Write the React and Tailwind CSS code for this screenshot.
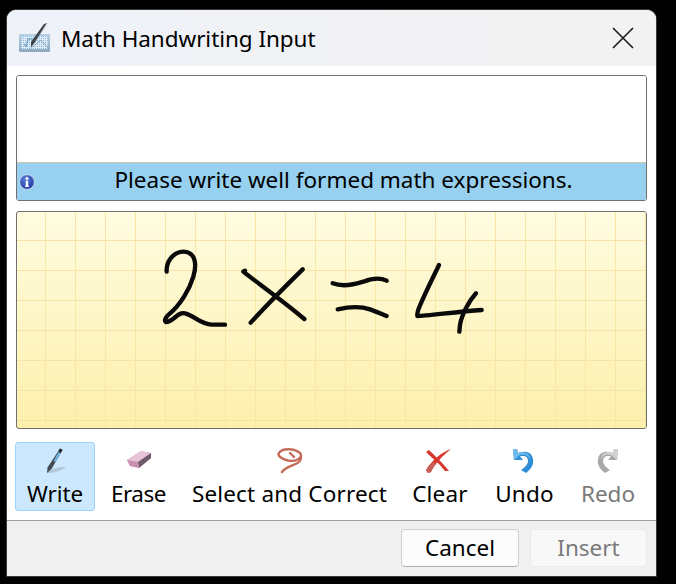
import React from "react";

const font = "font-['Noto_Sans','Open_Sans',sans-serif]";

function TitleIcon() {
  return (
    <svg width="36" height="36" viewBox="0 0 36 36" className="shrink-0">
      <defs>
        <linearGradient id="tab" x1="0" y1="0" x2="0" y2="1">
          <stop offset="0" stopColor="#b9d0e4" />
          <stop offset="1" stopColor="#8fa9bd" />
        </linearGradient>
        <pattern id="dots" width="2" height="2" patternUnits="userSpaceOnUse">
          <rect width="2" height="2" fill="#dcebf7" />
          <rect width="1" height="1" fill="#8fbbdf" />
        </pattern>
      </defs>
      <rect x="2" y="14" width="31" height="18" rx="1" fill="url(#tab)" />
      <rect x="4" y="16" width="27" height="13" fill="url(#dots)" />
      <path d="M7 24l2 3 2-8h5" fill="none" stroke="#5c93b5" strokeWidth="1" />
      <path d="M14 28l10-8 8 9" fill="none" stroke="#7b8e9c" strokeWidth="1" opacity="0.7" />
      <path d="M30 3 L19 21 L14 27 L14 22 L27 4 Z" fill="#3b4148" />
      <path d="M30 3 L18 22" stroke="#9aa4ac" strokeWidth="0.8" />
    </svg>
  );
}

function InfoIcon() {
  return (
    <svg width="16" height="16" viewBox="0 0 16 16" className="shrink-0">
      <defs>
        <radialGradient id="inf" cx="0.4" cy="0.3" r="0.8">
          <stop offset="0" stopColor="#5c7fdb" />
          <stop offset="1" stopColor="#18309a" />
        </radialGradient>
      </defs>
      <circle cx="8" cy="8" r="7.3" fill="url(#inf)" stroke="#dfe8f5" strokeWidth="0.7" />
      <circle cx="8" cy="4.4" r="1.5" fill="#fff" />
      <rect x="6.8" y="6.8" width="2.4" height="5.6" fill="#fff" />
      <rect x="6" y="11.6" width="4" height="1.2" fill="#fff" />
    </svg>
  );
}

function PenIcon() {
  return (
    <svg width="28" height="28" viewBox="0 0 28 28">
      <path d="M6 26 C10 21 18 20 25 20 C20 24 12 26 6 26Z" fill="#9fb0ba" opacity="0.6" />
      <path d="M19 1.5 L21.5 3 L10.5 22 L6 26 L6.5 20.5 Z" fill="#454b52" />
      <path d="M17.5 5 L19.5 6.5 L14.5 15 L12.5 14 Z" fill="#6db4df" />
      <path d="M19 1.5 L21.5 3 L20 5.5 L17.5 4 Z" fill="#23282c" />
    </svg>
  );
}

function EraserIcon() {
  return (
    <svg width="28" height="28" viewBox="0 0 28 28">
      <path d="M2 13 L16 4 L26 6 L26 11 L14 21 L5 19 Z" fill="#dca9c6" />
      <path d="M2 13 L16 4 L26 6 L13 15 Z" fill="#e8c3d8" />
      <path d="M13 15 L26 6 L26 11 L14 21 Z" fill="#6e5a6a" />
      <path d="M2 13 L13 15 L14 21 L5 19 Z" fill="#c78fb0" />
    </svg>
  );
}

function LassoIcon() {
  return (
    <svg width="28" height="28" viewBox="0 0 28 28">
      <path
        d="M3 6 C6 1 18 1 24 6 C28 11 19 15 12 13.5 C6 12 1 9 3 6 M14 6 L18 10 M25 10 C25 19 12 17 6 25"
        fill="none"
        stroke="#c46c58"
        strokeWidth="2.4"
        strokeLinecap="round"
      />
    </svg>
  );
}

function ClearIcon() {
  return (
    <svg width="28" height="28" viewBox="0 0 28 28">
      <path d="M2 5 L5 3 C11 9 18 15 25 24 L21 24 C15 16 8 11 2 5Z" fill="#d8362b" />
      <path d="M27 2 C18 5 8 13 2 23 L4 26 L7 25 C10 18 19 8 27 2Z" fill="#d8362b" />
      <path d="M9 15 C6 18 4 20 2 23 L4 26 L7 25 C8 22 10 19 12 17Z" fill="#c5605a" />
    </svg>
  );
}

function UndoIcon({ gray }) {
  const a = gray ? "#a8a8a8" : "#2f8fd6";
  const b = gray ? "#d2d2d2" : "#6fbbee";
  return (
    <svg width="28" height="28" viewBox="0 0 28 28">
      <path d="M4 2 L5 13 L14 13 L11 9.5 C16 8 19 10 19 14 C19 18 15 21 12 23 L17 26 C22 22 25 18 24 12 C23 5 16 3 9 6 L8 2Z" fill={a} />
      <path d="M4 2 L5 13 L10 8.5 C15 6 20 8 21 13 C22 8 16 3 9 6 L8 2Z" fill={b} />
    </svg>
  );
}

function Tool({ icon, label, w, active, disabled, iconClass = "", labelClass = "" }) {
  return (
    <div
      className={`flex h-[69px] flex-col items-center justify-between rounded-[3px] border pt-[2px] ${w} ${
        active ? "border-[#99d1ff] bg-[#cce8ff]" : "border-transparent"
      }`}
    >
      <div className={`flex h-[32px] items-center justify-center ${iconClass}`}>{icon}</div>
      <span className={`text-[22.5px] leading-[32px] ${labelClass} ${disabled ? "text-[#7a7a7a]" : "text-black"}`}>{label}</span>
    </div>
  );
}

export default function App() {
  return (
    <div className={`h-[584px] w-[676px] overflow-hidden bg-black pl-[7px] pt-[10px] ${font}`}>
      <div className="flex h-[566px] w-[649px] flex-col overflow-hidden rounded-t-[9px] bg-white shadow-[0_0_0_1px_#3a3a3a]">
        <div className="flex h-[56px] shrink-0 items-center bg-gradient-to-r from-[#eef2f9] via-[#f1f2f5] to-[#f2f2f2] pl-[10px] pr-[22px]">
          <TitleIcon />
          <span className="ml-[8px] mt-[2px] text-[22.5px] leading-none tracking-[-0.05px] text-black">Math Handwriting Input</span>
          <svg width="22" height="22" viewBox="0 0 22 22" className="ml-auto">
            <path d="M1 1 L21 21 M21 1 L1 21" stroke="#1a1a1a" strokeWidth="1.6" />
          </svg>
        </div>

        <div className="flex flex-1 flex-col px-[9px] pt-[9px]">
          <div className="flex h-[126px] flex-col overflow-hidden rounded-[3px] border border-[#6f6f6f]">
            <div className="h-[87px] border-b border-[#cfc8a0] bg-white" />
            <div className="relative flex flex-1 items-center justify-center bg-[#97d1ef] pb-[2px] pl-[24px]">
              <div className="absolute left-[2px] top-[11px]">
                <InfoIcon />
              </div>
              <span className="text-[22.5px] leading-none text-black">Please write well formed math expressions.</span>
            </div>
          </div>

          <div className="relative mt-[10px] h-[218px] overflow-hidden rounded-[3px] border border-[#6f6f6f] bg-[linear-gradient(to_bottom,#fffce0,#fdf0ac)]">
            <div className="absolute inset-0 bg-[linear-gradient(to_right,#f8e6a6_1px,transparent_1px),linear-gradient(to_bottom,#f8e3a6_1px,transparent_1px)] bg-[size:30px_30px] bg-[position:28px_28px]" />
            <svg width="360" height="110" viewBox="0 0 1080 330" className="absolute left-[123px] top-[18px]">
              <g fill="none" stroke="#0a0a0a" strokeWidth="13" strokeLinecap="round" strokeLinejoin="round">
                <path d="M80 125 C78 95 100 65 130 65 C165 65 172 100 160 140 C148 180 120 225 90 250 C72 265 70 280 85 275 C105 268 115 245 135 250 C165 258 180 282 215 284 L255 284" />
                <path d="M315 122 L310 125 C340 150 420 205 493 267" />
                <path d="M488 118 C440 165 380 225 332 278" />
                <path d="M578 160 C610 172 640 165 670 155 C695 145 720 142 740 152" />
                <path d="M593 238 C620 232 660 228 690 238 C710 245 725 252 740 258" />
                <path d="M897 105 C885 130 860 180 845 215 C838 232 830 245 832 258 C860 258 950 245 1025 240" />
                <path d="M1008 190 C985 215 965 255 960 285 L958 305" />
              </g>
            </svg>
          </div>
        </div>

        <div className="flex h-[91px] shrink-0 items-start pl-[8px] pt-[13px]">
          <Tool icon={<PenIcon />} label="Write" w="w-[80px]" active labelClass="tracking-[-0.1px]" />
          <Tool icon={<EraserIcon />} label="Erase" w="w-[87px]" labelClass="tracking-[-0.5px]" />
          <Tool icon={<LassoIcon />} label="Select and Correct" w="w-[215px]" labelClass="tracking-[0.17px]" />
          <Tool icon={<ClearIcon />} label="Clear" w="w-[86px]" iconClass="pr-[4px]" labelClass="tracking-[0.2px]" />
          <Tool icon={<UndoIcon />} label="Undo" w="w-[83px]" iconClass="pr-[4px]" labelClass="tracking-[0.2px]" />
          <Tool icon={<span className="inline-block -scale-x-100"><UndoIcon gray /></span>} label="Redo" w="w-[84px]" disabled />
        </div>

        <div className="flex h-[56px] shrink-0 items-start justify-end gap-[11px] border-t border-[#a0a0a0] bg-[#f0f0f0] pr-[9px] pt-[8px]">
          <div className="flex h-[38px] w-[118px] items-center justify-center rounded-[4px] border border-[#d0d0d0] border-b-[#b0b0b0] bg-[#fcfcfc] text-[22.5px] leading-none text-black">Cancel</div>
          <div className="flex h-[38px] w-[117px] items-center justify-center rounded-[4px] border border-[#ebebeb] bg-[#f8f8f8] text-[22.5px] leading-none text-[#7a7a7a]">Insert</div>
        </div>
      </div>
    </div>
  );
}
